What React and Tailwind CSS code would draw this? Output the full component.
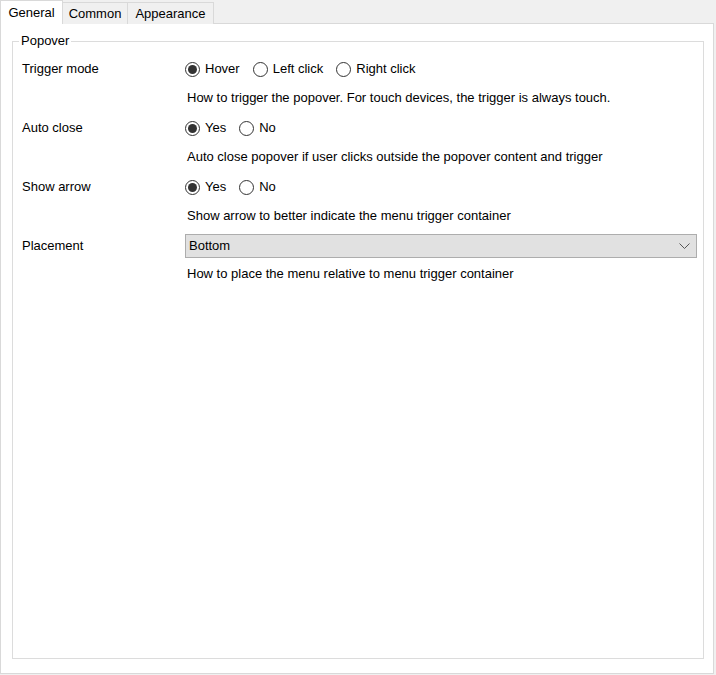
import React from 'react';

const Radio = ({ label, checked }) => (
  <label className="flex items-center gap-[5px] mr-[13px]">
    <span className="w-[15px] h-[15px] rounded-full border border-[#333333] bg-white flex items-center justify-center">
      {checked && <span className="w-[9px] h-[9px] rounded-full bg-[#333333]" />}
    </span>
    <span>{label}</span>
  </label>
);

const Row = ({ label, children, desc }) => (
  <div className="flex flex-col mb-[8px]">
    <div className="flex items-center h-[24px]">
      <div className="w-[163px] shrink-0">{label}</div>
      <div className="flex items-center flex-1">{children}</div>
    </div>
    <div className="pl-[165px] h-[20px] mt-[7px] flex items-center">{desc}</div>
  </div>
);

const App = () => {
  return (
    <div
      className="w-[716px] h-[675px] bg-[#f0f0f0] text-[13px] text-black"
      style={{ fontFamily: '"Segoe UI", "Liberation Sans", Arial, sans-serif' }}
    >
      <div className="flex items-end h-[24px] relative z-10">
        <div className="h-[24px] w-[63px] bg-white border border-b-0 border-[#d9d9d9] flex items-center justify-center">
          General
        </div>
        <div className="h-[22px] w-[65px] bg-[#f0f0f0] border border-l-0 border-b-0 border-[#d9d9d9] flex items-center justify-center">
          Common
        </div>
        <div className="h-[22px] w-[86px] bg-[#f0f0f0] border border-l-0 border-b-0 border-[#d9d9d9] flex items-center justify-center">
          Appearance
        </div>
      </div>
      <div className="w-[714px] h-[651px] -mt-[1px] bg-white border border-[#d9d9d9] pl-[11px] pr-[9px] pt-[10px]">
        <fieldset className="border border-[#dcdcdc] h-[625px] pl-[9px] pr-[6px] pt-[2px]">
          <legend className="px-[2px] -ml-[3px] leading-[14px]">Popover</legend>
          <div className="pt-[7px]">
            <Row label="Trigger mode" desc="How to trigger the popover. For touch devices, the trigger is always touch.">
              <Radio label="Hover" checked />
              <Radio label="Left click" />
              <Radio label="Right click" />
            </Row>
            <Row label="Auto close" desc="Auto close popover if user clicks outside the popover content and trigger">
              <Radio label="Yes" checked />
              <Radio label="No" />
            </Row>
            <Row label="Show arrow" desc="Show arrow to better indicate the menu trigger container">
              <Radio label="Yes" checked />
              <Radio label="No" />
            </Row>
            <div className="flex flex-col">
              <div className="flex items-center h-[24px]">
                <div className="w-[163px] shrink-0">Placement</div>
                <div className="flex-1 h-[24px] bg-[#e1e1e1] border border-[#adadad] flex items-center justify-between pl-[3px] pr-[6px]">
                  <span>Bottom</span>
                  <svg width="11" height="7" viewBox="0 0 11 7" fill="none">
                    <path d="M0.5 0.5 L5.5 5.5 L10.5 0.5" stroke="#555" strokeWidth="1" />
                  </svg>
                </div>
              </div>
              <div className="pl-[165px] h-[20px] mt-[6px] flex items-center">
                How to place the menu relative to menu trigger container
              </div>
            </div>
          </div>
        </fieldset>
      </div>
    </div>
  );
};

export default App;
